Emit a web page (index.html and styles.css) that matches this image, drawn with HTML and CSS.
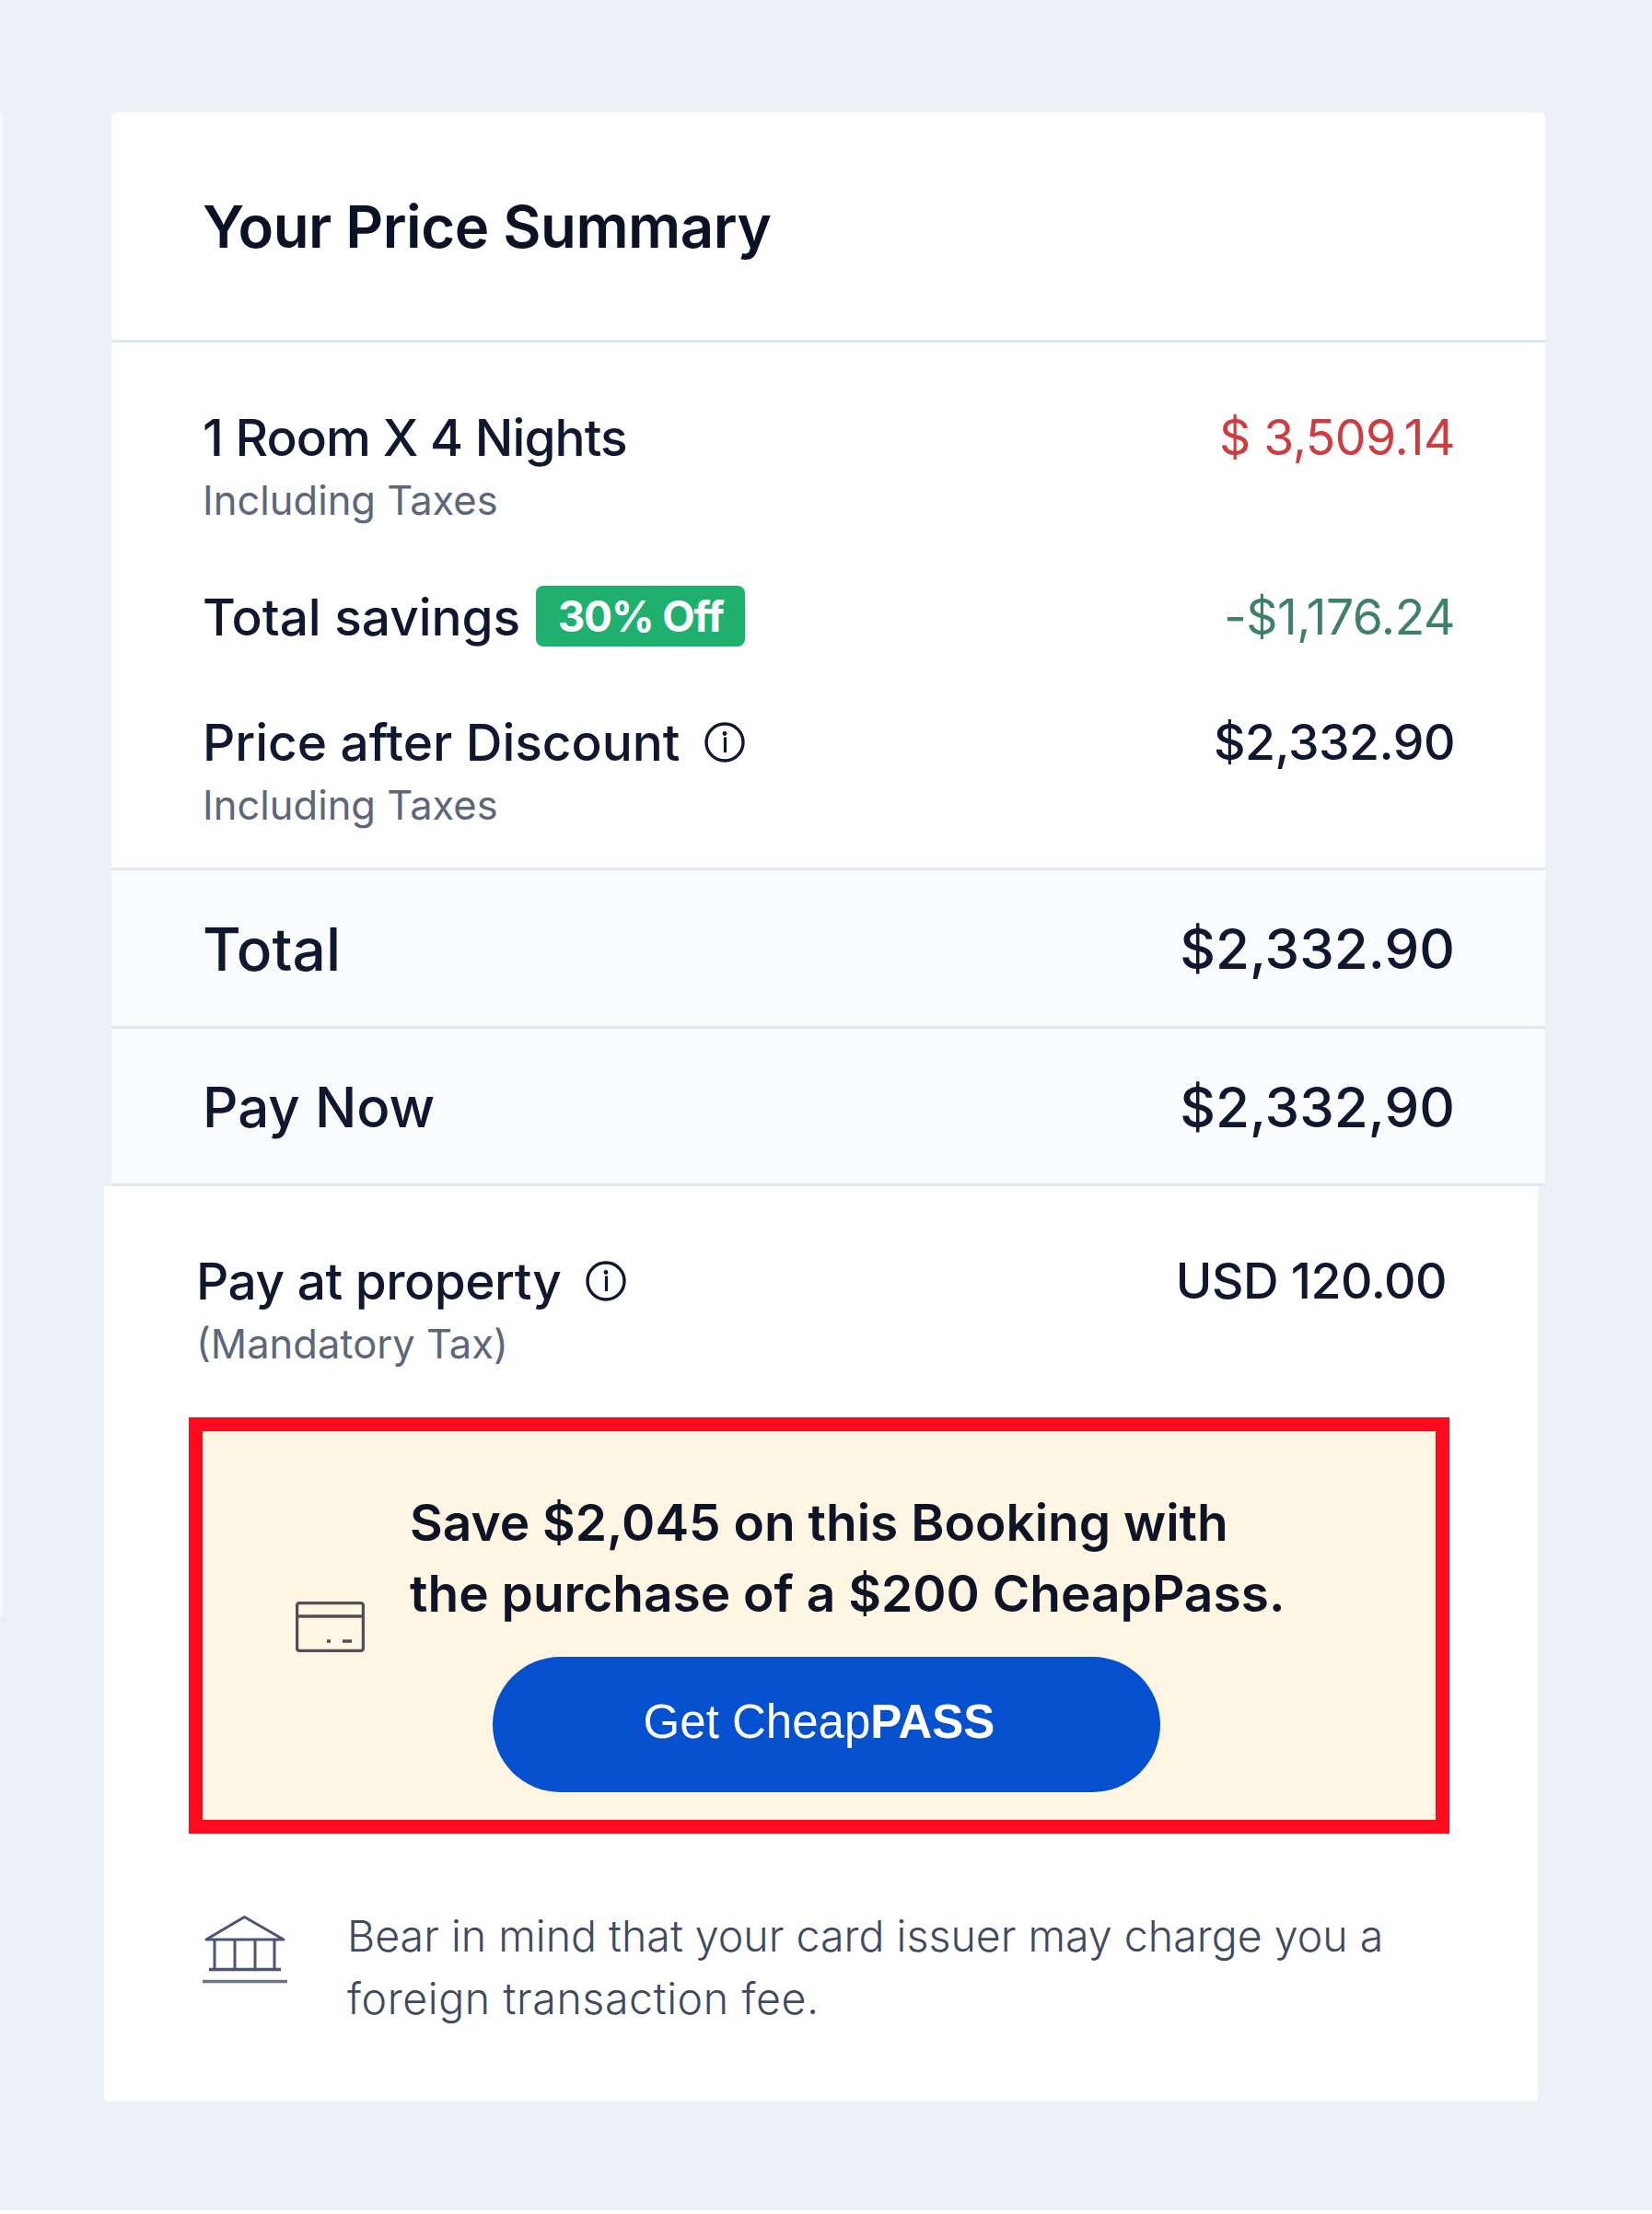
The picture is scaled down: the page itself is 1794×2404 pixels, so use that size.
FILE: index.html
```html
<!DOCTYPE html>
<html lang="en">
<head>
<meta charset="utf-8">
<title>Your Price Summary</title>
<link rel="stylesheet" href="styles.css">
</head>
<body>
<main class="page">
  <div class="edge-strip"></div>
  <section class="card card-top">
    <header class="card-head"><h1 class="title">Your Price Summary</h1></header>
    <div class="lines">
      <div class="row">
        <div><div class="label label-tight">1 Room X 4 Nights</div><div class="sub">Including Taxes</div></div>
        <div class="value value-red">$ 3,509.14</div>
      </div>
      <div class="row row-savings">
        <div class="label-group"><span class="label label-wide">Total savings</span><span class="badge">30% Off</span></div>
        <div class="value value-green">-$1,176.24</div>
      </div>
      <div class="row row-discount">
        <div>
          <div class="label-group"><span class="label label-wide">Price after Discount</span>
            <svg class="info" viewBox="0 0 44 44" aria-hidden="true"><circle cx="22" cy="22" r="20" fill="none" stroke="#101830" stroke-width="3.400"/><circle cx="22" cy="12.500" r="2.400" fill="#101830"/><path d="M21 18h1.500v15" fill="none" stroke="#101830" stroke-width="3.200"/></svg>
          </div>
          <div class="sub">Including Taxes</div>
        </div>
        <div class="value value-dark">$2,332.90</div>
      </div>
    </div>
    <div class="total"><span class="total-word">Total</span><span>$2,332.90</span></div>
    <div class="total"><span>Pay Now</span><span>$2,332,90</span></div>
  </section>
  <section class="card card-bottom">
    <div class="row row-property">
      <div>
        <div class="label-group"><span class="label">Pay at property</span>
          <svg class="info" viewBox="0 0 44 44" aria-hidden="true"><circle cx="22" cy="22" r="20" fill="none" stroke="#101830" stroke-width="3.400"/><circle cx="22" cy="12.500" r="2.400" fill="#101830"/><path d="M21 18h1.500v15" fill="none" stroke="#101830" stroke-width="3.200"/></svg>
        </div>
        <div class="sub">(Mandatory Tax)</div>
      </div>
      <div class="value value-dark">USD 120.00</div>
    </div>
    <div class="promo">
      <svg class="card-icon" viewBox="0 0 75 55" aria-hidden="true"><rect x="1.500" y="1.500" width="72" height="52" rx="3" fill="none" stroke="#4f5157" stroke-width="3.400"/><path d="M1.500 16h72" stroke="#4f5157" stroke-width="3.400"/><path d="M34 43h4M51 43h10" stroke="#4f5157" stroke-width="3.400"/></svg>
      <div class="promo-body">
        <p class="promo-text">Save $2,045 on this Booking with<br>the purchase of a $200 CheapPass.</p>
        <button class="cta" type="button">Get Cheap<b>PASS</b></button>
      </div>
    </div>
    <div class="note">
      <svg class="bank-icon" viewBox="0 0 94 76" aria-hidden="true"><path d="M46.500 1.500 5 26h84z" fill="none" stroke="#4b5670" stroke-width="3" stroke-linejoin="round"/><path d="M14 27v31M36 27v31M58 27v31M79 27v31" stroke="#4b5670" stroke-width="3"/><path d="M8 58.500h78" stroke="#4b5670" stroke-width="3.500"/><path d="M1 71.500h92" stroke="#6a7388" stroke-width="3.500"/></svg>
      <p class="note-text">Bear in mind that your card issuer may charge you a<br><span class="note-line-wide">foreign transaction fee.</span></p>
    </div>
  </section>
  <div class="page-foot"></div>
</main>
</body>
</html>
```
FILE: styles.css
```css
* { box-sizing: border-box; }
html, body { margin: 0; padding: 0; }
body {
  background: #ecf1f8;
  font-family: Inter, "Noto Sans", sans-serif;
  color: #101830;
}
.page { position: relative; width: 1794px; height: 2404px; padding-top: 120px; border-top: 2px solid #eaf3f3; display: flex; flex-direction: column; }
.edge-strip { position: absolute; left: 0; top: 120px; width: 3px; height: 1633px; background: #f6f9fc; border-radius: 0 0 3px 0; }
.card { background: #fff; }
.card-top { width: 1557px; margin-left: 121px; border-radius: 6px 6px 0 0; }
.card-bottom { width: 1557px; height: 994px; margin-left: 113px; padding: 69px 99px 0 100px; border-radius: 0 0 6px 6px; }
.card-head { height: 250px; padding-left: 99px; display: flex; align-items: center; border-bottom: 3px solid #dfe7f3; }
.title { margin: 0; font-size: 63.500px; font-weight: 600; letter-spacing: -0.5px; color: #0b1226; }
.lines { padding: 69px 98px 0 99px; height: 573px; border-bottom: 3px solid #dfe7f3; }
.row { display: flex; justify-content: space-between; align-items: flex-start; }
.row-savings { margin-top: 59px; }
.row-discount { margin-top: 68px; }
.label-group { display: flex; align-items: center; }
.label { font-size: 55px; line-height: 68px; font-weight: 500; letter-spacing: -0.5px; }
.label-tight { letter-spacing: -0.95px; }
.label-wide { letter-spacing: -0.05px; }
.value { font-size: 53.500px; line-height: 68px; font-weight: 500; letter-spacing: -0.5px; }
.sub { font-size: 43.500px; line-height: 68px; font-weight: 400; color: #5c6779; }
.value-red { color: #cf3b3f; font-weight: 400; }
.value-green { color: #3f7f6c; font-weight: 400; }
.value-dark { color: #101830; }
.badge { margin: -3px 0 0 17px; width: 227px; height: 66px; border-radius: 8px; background: #1fb06f; color: #fff; font-size: 46px; font-weight: 700; line-height: 66px; text-align: center; letter-spacing: -1.2px; }
.info { width: 44px; height: 44px; margin-left: 27px; }
.total { height: 171.500px; padding: 2px 98px 0 99px; display: flex; justify-content: space-between; align-items: center; background: #f9fbfd; border-bottom: 3px solid #dfe7f3; font-size: 60px; font-weight: 500; color: #101830; }
.total-word { font-size: 64px; }
.promo { width: 1369px; height: 452px; margin: 46px 0 0 -8px; border: 15px solid #ff0a1c; background: #fef6e2; display: flex; align-items: flex-start; padding: 61px 0 0 101px; }
.card-icon { width: 75px; height: 55px; margin-top: 124px; flex: none; }
.promo-body { margin-left: 49px; }
.promo-text { margin: 0; font-size: 55px; line-height: 77px; font-weight: 600; color: #0e1426; }
.cta { display: block; width: 725px; height: 147px; margin: 30px 0 0 90px; padding: 0 16px 6px 0; border: 0; border-radius: 74px; background: #0450cf; color: #fff; font-family: "Liberation Sans", Arial, sans-serif; font-size: 51px; }
.cta b { font-weight: 700; }
.note { display: flex; align-items: flex-start; margin-top: 77px; }
.bank-icon { width: 94px; height: 76px; margin: 12px 0 0 6px; flex: none; }
.note-text { margin: 0 0 0 64px; font-size: 46.500px; line-height: 68px; font-weight: 300; color: #3f4a60; }
.note-line-wide { letter-spacing: 0.6px; }
.page-foot { height: 4px; margin-top: 118px; background: #fff; }
```
